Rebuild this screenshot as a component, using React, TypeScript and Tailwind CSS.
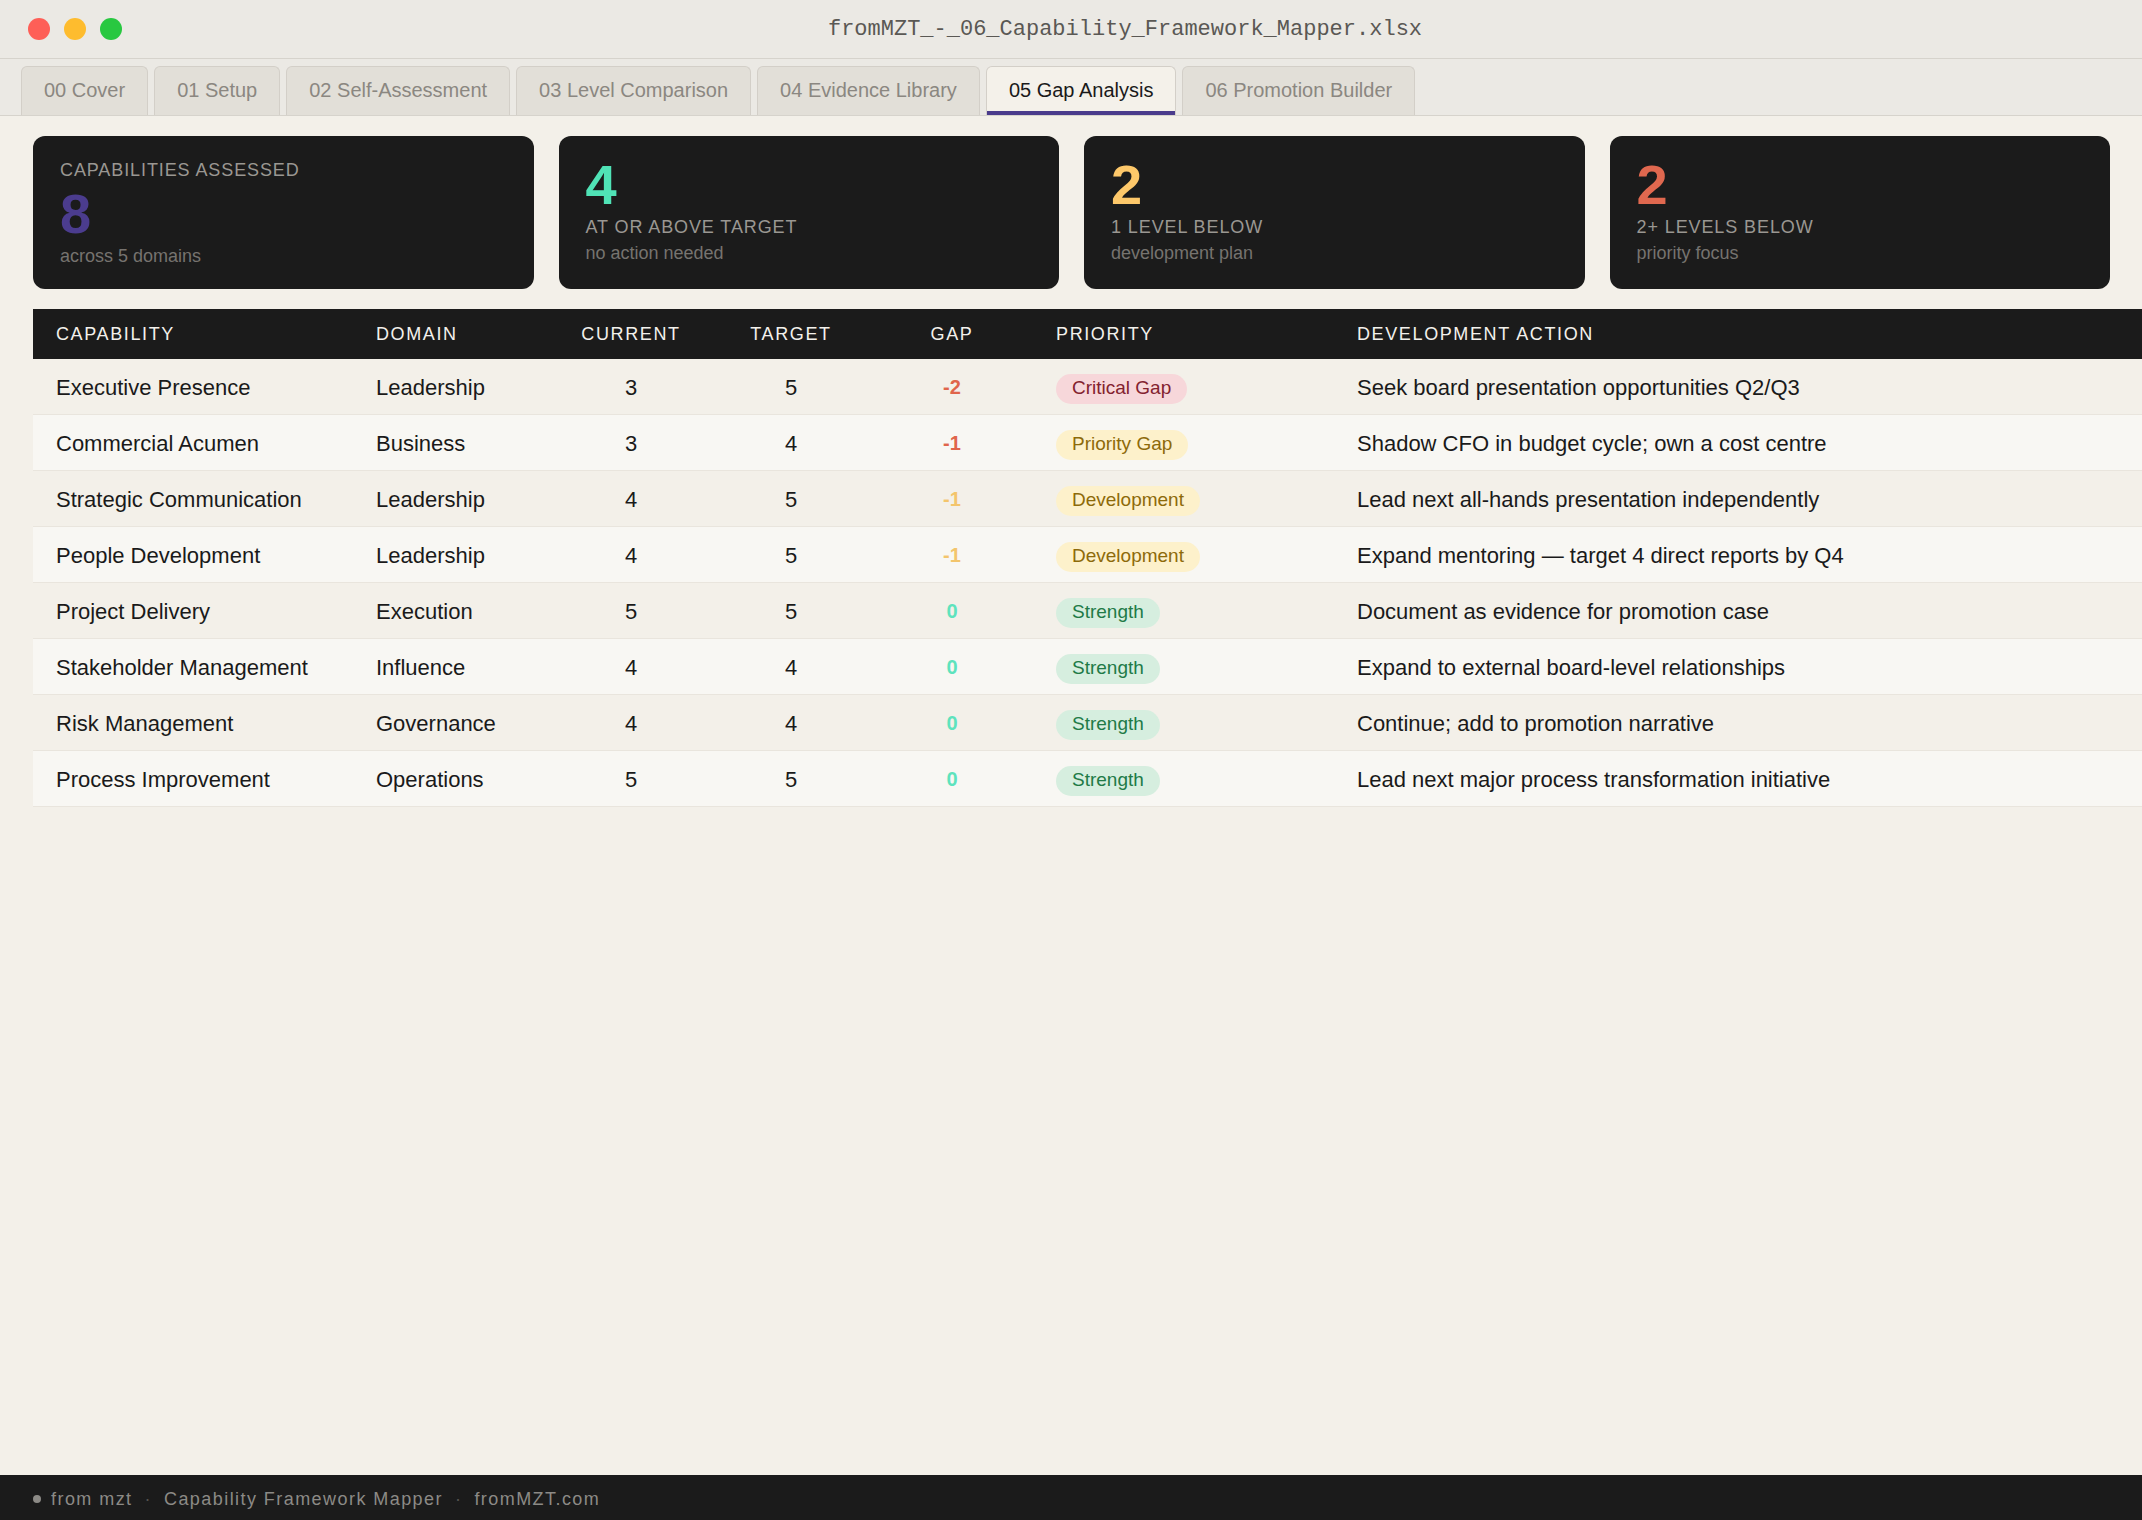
const tabs = [
  "00 Cover",
  "01 Setup",
  "02 Self-Assessment",
  "03 Level Comparison",
  "04 Evidence Library",
  "05 Gap Analysis",
  "06 Promotion Builder",
];

type Row = {
  capability: string;
  domain: string;
  current: number;
  target: number;
  gap: string;
  gapClass: string;
  priority: string;
  badgeClass: string;
  action: string;
};

const rows: Row[] = [
  {
    capability: "Executive Presence",
    domain: "Leadership",
    current: 3,
    target: 5,
    gap: "-2",
    gapClass: "text-[#e0654b]",
    priority: "Critical Gap",
    badgeClass: "bg-[#f7d7da] text-[#83222f]",
    action: "Seek board presentation opportunities Q2/Q3",
  },
  {
    capability: "Commercial Acumen",
    domain: "Business",
    current: 3,
    target: 4,
    gap: "-1",
    gapClass: "text-[#e0654b]",
    priority: "Priority Gap",
    badgeClass: "bg-[#fdf1cb] text-[#8d6a0a]",
    action: "Shadow CFO in budget cycle; own a cost centre",
  },
  {
    capability: "Strategic Communication",
    domain: "Leadership",
    current: 4,
    target: 5,
    gap: "-1",
    gapClass: "text-[#f3c56c]",
    priority: "Development",
    badgeClass: "bg-[#fdf1cb] text-[#8d6a0a]",
    action: "Lead next all-hands presentation independently",
  },
  {
    capability: "People Development",
    domain: "Leadership",
    current: 4,
    target: 5,
    gap: "-1",
    gapClass: "text-[#f3c56c]",
    priority: "Development",
    badgeClass: "bg-[#fdf1cb] text-[#8d6a0a]",
    action: "Expand mentoring — target 4 direct reports by Q4",
  },
  {
    capability: "Project Delivery",
    domain: "Execution",
    current: 5,
    target: 5,
    gap: "0",
    gapClass: "text-[#5ee3bd]",
    priority: "Strength",
    badgeClass: "bg-[#d6eedf] text-[#217a47]",
    action: "Document as evidence for promotion case",
  },
  {
    capability: "Stakeholder Management",
    domain: "Influence",
    current: 4,
    target: 4,
    gap: "0",
    gapClass: "text-[#5ee3bd]",
    priority: "Strength",
    badgeClass: "bg-[#d6eedf] text-[#217a47]",
    action: "Expand to external board-level relationships",
  },
  {
    capability: "Risk Management",
    domain: "Governance",
    current: 4,
    target: 4,
    gap: "0",
    gapClass: "text-[#5ee3bd]",
    priority: "Strength",
    badgeClass: "bg-[#d6eedf] text-[#217a47]",
    action: "Continue; add to promotion narrative",
  },
  {
    capability: "Process Improvement",
    domain: "Operations",
    current: 5,
    target: 5,
    gap: "0",
    gapClass: "text-[#5ee3bd]",
    priority: "Strength",
    badgeClass: "bg-[#d6eedf] text-[#217a47]",
    action: "Lead next major process transformation initiative",
  },
];

const cols =
  "grid grid-cols-[320px_198px_160px_160px_162px_301px_1fr] items-center";

function StatCard({
  value,
  color,
  label,
  sub,
}: {
  value: string;
  color: string;
  label: string;
  sub: string;
}) {
  return (
    <div className="bg-[#1b1b1b] rounded-[12px] px-[27px] pt-[21px]">
      <div className={`text-[56px] leading-none font-bold ${color}`}>{value}</div>
      <div className="mt-[4px] text-[18px] leading-[1.2] uppercase tracking-[0.05em] text-[#9a9792]">
        {label}
      </div>
      <div className="mt-[4px] text-[18px] leading-[1.2] text-[#76736f]">{sub}</div>
    </div>
  );
}

export default function App() {
  return (
    <div className="h-[1520px] flex flex-col bg-[#f3f0e9] font-['Liberation_Sans',Arial,sans-serif] text-[#1a1a1a]">
      {/* window title */}
      <div className="h-[59px] shrink-0 flex items-center bg-[#ebe9e4] border-b border-[#d6d3cc] pl-[28px] pr-[14px]">
        <div className="flex gap-[14px]">
          <span className="w-[22px] h-[22px] rounded-full bg-[#fe5f57]" />
          <span className="w-[22px] h-[22px] rounded-full bg-[#febc2e]" />
          <span className="w-[22px] h-[22px] rounded-full bg-[#28c840]" />
        </div>
        <div className="flex-1 text-center font-['Liberation_Mono',monospace] text-[22px] text-[#5a5854]">
          fromMZT_-_06_Capability_Framework_Mapper.xlsx
        </div>
      </div>

      {/* sheet tabs */}
      <div className="shrink-0 flex items-end gap-[6px] bg-[#ebe9e4] pl-[21px] pt-[7px] border-b border-[#d6d3cc]">
        {tabs.map((t) =>
          t === "05 Gap Analysis" ? (
            <div
              key={t}
              className="h-[49px] flex items-center pb-[2px] px-[22px] rounded-t-[6px] border border-b-0 border-[#d3cfc8] bg-[#f4f1ea] text-[20px] text-[#1a1a1a] shadow-[inset_0_-4px_0_#4a3b8c]"
            >
              {t}
            </div>
          ) : (
            <div
              key={t}
              className="h-[49px] flex items-center pb-[2px] px-[22px] rounded-t-[6px] border border-b-0 border-[#d3cfc8] bg-[#e2dfd8] text-[20px] text-[#8b8781]"
            >
              {t}
            </div>
          )
        )}
      </div>

      {/* content */}
      <div className="flex-1 pl-[33px] pt-[20px]">
        <div className="grid grid-cols-4 gap-[25px] pr-[32px]">
          <div className="bg-[#1b1b1b] rounded-[12px] px-[27px] pt-[24px] pb-[22px]">
            <div className="text-[18px] leading-[1.2] uppercase tracking-[0.05em] text-[#9a9792]">
              Capabilities Assessed
            </div>
            <div className="mt-[4px] text-[56px] leading-none font-bold text-[#4b3c8e]">8</div>
            <div className="mt-[4px] text-[18px] leading-[1.2] text-[#76736f]">
              across 5 domains
            </div>
          </div>
          <StatCard value="4" color="text-[#50e3b6]" label="At or above target" sub="no action needed" />
          <StatCard value="2" color="text-[#fdc86a]" label="1 level below" sub="development plan" />
          <StatCard value="2" color="text-[#e0684f]" label="2+ levels below" sub="priority focus" />
        </div>

        <div className="mt-[20px]">
          <div
            className={`${cols} h-[50px] bg-[#1b1b1b] text-[18px] uppercase tracking-[0.09em] text-[#f3f1ec]`}
          >
            <div className="pl-[23px]">Capability</div>
            <div className="pl-[23px]">Domain</div>
            <div className="text-center">Current</div>
            <div className="text-center">Target</div>
            <div className="text-center">Gap</div>
            <div className="pl-[23px]">Priority</div>
            <div className="pl-[23px]">Development Action</div>
          </div>
          {rows.map((r, i) => (
            <div
              key={r.capability}
              className={`${cols} h-[56px] pt-[1px] border-b border-[#e9e5dd] text-[22px] ${
                i % 2 === 0 ? "bg-[#f3f0e9]" : "bg-[#f8f7f3]"
              }`}
            >
              <div className="pl-[23px]">{r.capability}</div>
              <div className="pl-[23px]">{r.domain}</div>
              <div className="text-center">{r.current}</div>
              <div className="text-center">{r.target}</div>
              <div className={`text-center text-[20px] font-bold ${r.gapClass}`}>{r.gap}</div>
              <div className="pl-[23px]">
                <span
                  className={`inline-block rounded-full px-[16px] pt-[3px] pb-[5px] text-[19px] leading-[22px] ${r.badgeClass}`}
                >
                  {r.priority}
                </span>
              </div>
              <div className="pl-[23px]">{r.action}</div>
            </div>
          ))}
        </div>
      </div>

      {/* footer */}
      <div className="h-[45px] shrink-0 flex items-center pt-[3px] bg-[#1b1b1b] pl-[33px] text-[18px] tracking-[0.08em] text-[#8c8a86]">
        <span className="w-[8px] h-[8px] rounded-full bg-[#8c8a86] mr-[10px]" />
        <span>from mzt</span>
        <span className="mx-[12px] text-[#55534f]">·</span>
        <span>Capability Framework Mapper</span>
        <span className="mx-[12px] text-[#55534f]">·</span>
        <span>fromMZT.com</span>
      </div>
    </div>
  );
}
